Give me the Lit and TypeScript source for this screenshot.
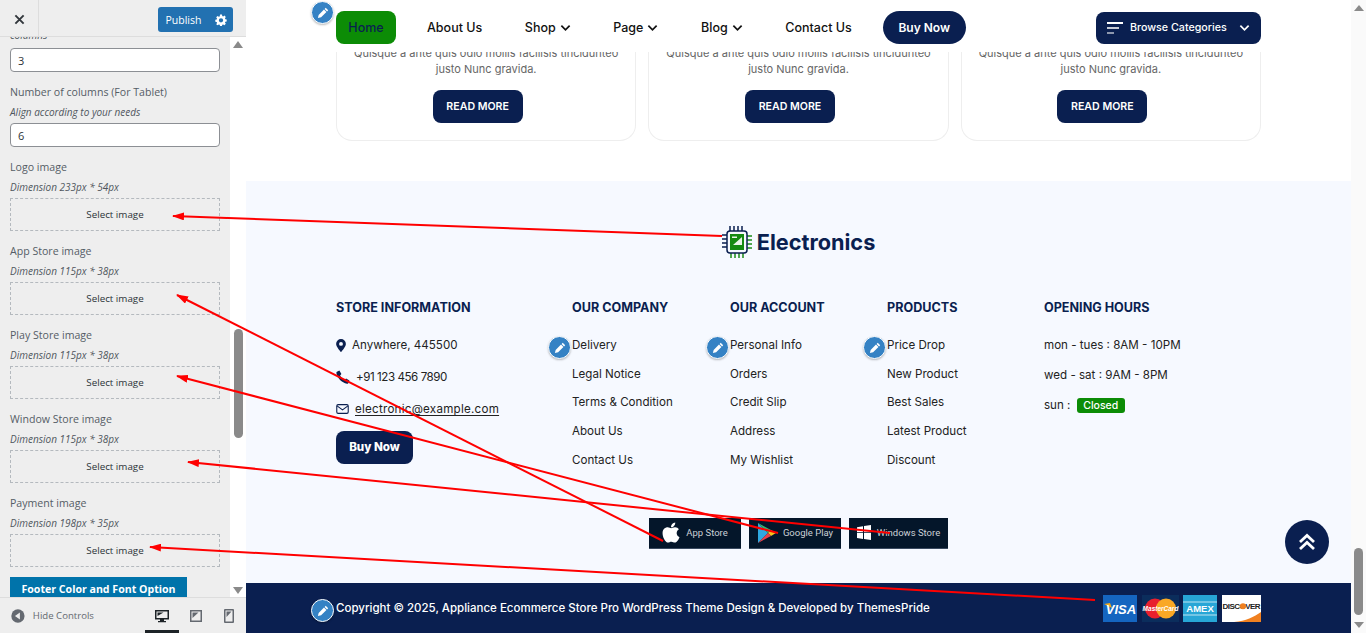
import { LitElement, css, html, svg } from 'lit';
import { customElement } from 'lit/decorators.js';

const pencil = html`<svg viewBox="0 0 20 20" width="14" height="14" aria-hidden="true">
  <path
    fill="#fff"
    d="M13.9 2.6l3.5 3.5-1.6 1.6-3.5-3.5 1.6-1.6zM11.4 5.1l3.5 3.5-7.6 7.6-4.6 1.1 1.1-4.6 7.6-7.6z"
  />
</svg>`;

const chevron = html`<svg class="chev" viewBox="0 0 12 8" width="11" height="8" aria-hidden="true">
  <path d="M1.5 1.5L6 6l4.5-4.5" fill="none" stroke="currentColor" stroke-width="1.9" />
</svg>`;

const imageFields = [
  { label: 'Logo image', dim: 'Dimension 233px * 54px' },
  { label: 'App Store image', dim: 'Dimension 115px * 38px' },
  { label: 'Play Store image', dim: 'Dimension 115px * 38px' },
  { label: 'Window Store image', dim: 'Dimension 115px * 38px' },
  { label: 'Payment image', dim: 'Dimension 198px * 35px' },
];

@customElement('customizer-panel')
export class CustomizerPanel extends LitElement {
  static styles = css`
    :host {
      display: flex;
      flex-direction: column;
      width: 246px;
      height: 633px;
      flex: none;
      background: #eee;
      font-family: 'Open Sans', 'Noto Sans', sans-serif;
      color: #50575e;
    }
    .top {
      height: 36px;
      flex: none;
      display: flex;
      align-items: flex-start;
      border-bottom: 1px solid #ddd;
    }
    .close {
      width: 39px;
      height: 36px;
      padding-top: 2px;
      display: flex;
      align-items: center;
      justify-content: center;
      border-right: 1px solid #ddd;
      box-sizing: border-box;
    }
    .publish {
      margin: 7px 0 0 119px;
      display: flex;
      width: 75px;
      height: 25px;
      border-radius: 3px;
      overflow: hidden;
      background: #2271b1;
      color: #fff;
      font-size: 10.5px;
      font-weight: 500;
    }
    .publish span {
      width: 51px;
      display: flex;
      align-items: center;
      justify-content: center;
    }
    .publish i {
      width: 24px;
      display: flex;
      align-items: center;
      justify-content: center;
    }
    .middle {
      flex: 1;
      display: flex;
      min-height: 0;
    }
    .fields {
      flex: 1;
      padding: 0 10px;
      overflow: hidden;
    }
    .clipped {
      margin-top: -7px;
      height: 11px;
      line-height: 11px;
      font-size: 10px;
      font-style: italic;
    }
    input {
      display: block;
      box-sizing: border-box;
      width: 210px;
      height: 24px;
      margin: 0;
      padding: 0 7px;
      border: 1px solid #8c8f94;
      border-radius: 4px;
      background: #fff;
      color: #2c3338;
      font: 11px 'Open Sans', sans-serif;
    }
    .first {
      margin-top: 7px;
    }
    label {
      display: block;
      font-size: 10.6px;
      font-weight: 500;
      line-height: 16px;
      color: #555d66;
    }
    .tablet {
      margin-top: 12px;
    }
    .dim {
      display: block;
      font-size: 10px;
      font-style: italic;
      line-height: 14px;
      margin: 5px 0 4px;
      color: #50575e;
    }
    .image-field {
      margin-top: 12px;
    }
    .drop {
      box-sizing: border-box;
      width: 210px;
      height: 33px;
      border: 1px dashed #b4b9be;
      display: flex;
      align-items: center;
      justify-content: center;
      font-size: 9.8px;
      color: #2c3338;
    }
    .section-btn {
      margin-top: 10px;
      width: 177px;
      height: 30px;
      background: #0073aa;
      color: #fff;
      font-size: 10.6px;
      font-weight: 700;
      text-align: center;
      line-height: 24px;
    }
    .track {
      width: 16px;
      flex: none;
      background: #fff;
      display: flex;
      flex-direction: column;
      align-items: center;
    }
    .arrow {
      width: 0;
      height: 0;
      border-left: 5px solid transparent;
      border-right: 5px solid transparent;
    }
    .arrow.up {
      margin-top: 4px;
      border-bottom: 7px solid #8a8a8a;
    }
    .arrow.down {
      margin-top: auto;
      margin-bottom: 3px;
      border-top: 7px solid #8a8a8a;
    }
    .thumb {
      width: 9px;
      height: 109px;
      margin-top: 281px;
      border-radius: 5px;
      background: #8a8a8a;
    }
    .bottom {
      height: 36px;
      flex: none;
      display: flex;
      align-items: center;
      box-sizing: border-box;
      border-top: 1px solid #ddd;
      background: #eee;
      padding-left: 11px;
      font-size: 9.6px;
      color: #646970;
    }
    .hide {
      margin: 0 51px 0 8px;
      width: 62px;
    }
    .device {
      width: 34px;
      height: 35px;
      box-sizing: border-box;
      display: flex;
      align-items: center;
      justify-content: center;
      color: #646970;
    }
    .device.on {
      color: #1d2327;
      border-bottom: 3px solid #1d2327;
      padding-top: 3px;
    }
  `;

  render() {
    return html`
      <div class="top">
        <div class="close">
          <svg viewBox="0 0 12 12" width="11" height="11" aria-hidden="true">
            <path d="M1.5 1.5l9 9M10.5 1.5l-9 9" stroke="#32373c" stroke-width="2.1" />
          </svg>
        </div>
        <div class="publish">
          <span>Publish</span>
          <i>
            <svg viewBox="0 0 20 20" width="12" height="12" aria-hidden="true">
              <path
                fill="#fff"
                fill-rule="evenodd"
                d="M8.4 1h3.2l.5 2.5 1.5.6 2.1-1.4 2.3 2.3-1.4 2.1.6 1.5 2.3.5v3.2l-2.3.5-.6 1.5 1.4 2.1-2.3 2.3-2.1-1.4-1.5.6-.5 2.1H8.4l-.5-2.1-1.5-.6-2.1 1.4L2 16.9l1.4-2.1-.6-1.5L.5 12.8V9.6l2.3-.5.6-1.5L2 5.5l2.3-2.3 2.1 1.4 1.5-.6zM10 7a3.6 3.6 0 100 7.2A3.6 3.6 0 0010 7z"
              />
            </svg>
          </i>
        </div>
      </div>
      <div class="middle">
        <div class="fields">
          <div class="clipped">columns</div>
          <input class="first" value="3" />
          <label class="tablet">Number of columns (For Tablet)</label>
          <span class="dim">Align according to your needs</span>
          <input value="6" />
          ${imageFields.map(
            (f) => html`<div class="image-field">
              <label>${f.label}</label>
              <span class="dim">${f.dim}</span>
              <div class="drop">Select image</div>
            </div>`,
          )}
          <div class="section-btn">Footer Color and Font Option</div>
        </div>
        <div class="track">
          <div class="arrow up"></div>
          <div class="thumb"></div>
          <div class="arrow down"></div>
        </div>
      </div>
      <div class="bottom">
        <svg viewBox="0 0 14 14" width="14" height="14" aria-hidden="true">
          <circle cx="7" cy="7" r="6.7" fill="#646970" />
          <path d="M9 3.5v7L4 7z" fill="#eee" />
        </svg>
        <span class="hide">Hide Controls</span>
        <div class="device on">
          <svg viewBox="0 0 14 14" width="14" height="14" aria-hidden="true">
            <path
              fill="currentColor"
              fill-rule="evenodd"
              d="M0 1h14v9.5H9v1.5h2v1.2H3V12h2v-1.500H0zM1.500 2.500v6.500h11V2.500zM2.500 3.500h6L2.500 7z"
            />
          </svg>
        </div>
        <div class="device">
          <svg viewBox="0 0 12 14" width="12" height="14" aria-hidden="true">
            <path
              fill="currentColor"
              fill-rule="evenodd"
              d="M0 1h12v12H0zM1.500 2.500v9h9v-9zM2.500 3.500h6L2.500 9z"
            />
          </svg>
        </div>
        <div class="device">
          <svg viewBox="0 0 10 14" width="10" height="14" aria-hidden="true">
            <path
              fill="currentColor"
              fill-rule="evenodd"
              d="M1 0h8a1 1 0 011 1v12a1 1 0 01-1 1H1a1 1 0 01-1-1V1a1 1 0 011-1zM1.500 1.500v11h7v-11zM2.500 2.500h5L2.500 8z"
            />
          </svg>
        </div>
      </div>
    `;
  }
}

const footerColumns = [
  {
    title: 'OUR COMPANY',
    width: 158,
    links: ['Delivery', 'Legal Notice', 'Terms & Condition', 'About Us', 'Contact Us'],
  },
  {
    title: 'OUR ACCOUNT',
    width: 157,
    links: ['Personal Info', 'Orders', 'Credit Slip', 'Address', 'My Wishlist'],
  },
  {
    title: 'PRODUCTS',
    width: 157,
    links: ['Price Drop', 'New Product', 'Best Sales', 'Latest Product', 'Discount'],
  },
];

@customElement('site-preview')
export class SitePreview extends LitElement {
  static styles = css`
    :host {
      display: flex;
      flex-direction: column;
      flex: 1;
      min-width: 0;
      height: 633px;
      background: #fff;
      font-family: Inter, 'Open Sans', sans-serif;
      color: #1c1c1c;
      --navy: #0a1f50;
    }
    .wrap {
      width: 925px;
      margin: 0 auto;
      position: relative;
    }
    .edit {
      position: absolute;
      box-sizing: border-box;
      width: 23px;
      height: 23px;
      border-radius: 50%;
      background: #3582c4;
      border: 1px solid #fff;
      box-shadow: 0 1px 2px rgba(0, 0, 0, 0.25);
      display: flex;
      align-items: center;
      justify-content: center;
    }

    /* nav */
    .nav {
      height: 52px;
      flex: none;
      background: #fff;
    }
    .nav .wrap {
      height: 52px;
      display: flex;
      align-items: center;
      padding: 7px 0 4px;
      box-sizing: border-box;
    }
    .nav .edit {
      left: -25px;
      top: 1px;
    }
    .home {
      width: 60px;
      height: 33px;
      border-radius: 8px;
      background: #0c8c06;
      color: var(--navy);
      font-size: 12.5px;
      font-weight: 500;
      display: flex;
      align-items: center;
      justify-content: center;
    }
    .nav-links {
      display: flex;
      align-items: center;
      margin-left: 31px;
      gap: 42.6px;
      font-size: 12.5px;
      font-weight: 500;
      color: #111;
    }
    .nav-links a {
      display: flex;
      align-items: center;
      gap: 4px;
      white-space: nowrap;
    }
    .buy-pill {
      margin-left: 31px;
      width: 83px;
      height: 33px;
      border-radius: 17px;
      background: var(--navy);
      color: #fff;
      font-size: 12px;
      font-weight: 600;
      display: flex;
      align-items: center;
      justify-content: center;
    }
    .browse {
      margin-left: auto;
      width: 165px;
      height: 32px;
      box-sizing: border-box;
      padding: 0 11px;
      border-radius: 8px;
      background: var(--navy);
      color: #fff;
      font-size: 10.7px;
      font-weight: 500;
      display: flex;
      align-items: center;
      gap: 7px;
    }
    .browse .chev {
      margin-left: auto;
    }

    /* cards, scrolled so only their lower part shows under the sticky nav */
    .cards-band {
      height: 129px;
      flex: none;
      overflow: hidden;
      display: flex;
      align-items: flex-end;
      padding-bottom: 40px;
      box-sizing: border-box;
    }
    .cards {
      display: grid;
      grid-template-columns: repeat(3, 1fr);
      gap: 12px;
    }
    .card {
      box-sizing: border-box;
      height: 106px;
      border: 1px solid #eee;
      border-top: 0;
      border-radius: 0 0 16px 16px;
      display: flex;
      flex-direction: column;
      align-items: center;
      justify-content: flex-end;
      text-align: center;
      padding: 0 16px 17px;
      font-size: 11px;
      line-height: 16px;
      color: #666;
    }
    .card p {
      margin: 0 0 13px;
      white-space: nowrap;
    }
    .read-more {
      width: 90px;
      height: 33px;
      flex: none;
      margin-right: 17px;
      border-radius: 8px;
      background: var(--navy);
      color: #fff;
      font-size: 10.6px;
      font-weight: 600;
      line-height: 33px;
    }

    /* footer */
    .footer {
      flex: 1;
      min-height: 0;
      background: #f6f9ff;
      position: relative;
    }
    .logo {
      display: flex;
      justify-content: center;
      align-items: center;
      gap: 5px;
      padding-top: 45px;
      height: 32px;
      font-size: 21.7px;
      font-weight: 700;
      color: var(--navy);
    }
    .columns {
      display: flex;
      margin-top: 40px;
      font-size: 11.6px;
    }
    .col {
      position: relative;
      flex: none;
    }
    .col h3 {
      margin: 0 0 19px;
      height: 20px;
      line-height: 20px;
      font-size: 12.6px;
      font-weight: 700;
      color: var(--navy);
      white-space: nowrap;
    }
    .col .edit {
      left: -24px;
      top: 38px;
    }
    .links {
      display: flex;
      flex-direction: column;
      gap: 12.7px;
      line-height: 16px;
      color: #222;
    }
    .contact {
      display: flex;
      flex-direction: column;
      gap: 16px;
      line-height: 16px;
      color: #222;
    }
    .contact div {
      display: flex;
      align-items: center;
      gap: 6px;
      white-space: nowrap;
    }
    .contact u {
      text-underline-offset: 2px;
      letter-spacing: 0.25px;
    }
    .phone {
      letter-spacing: -0.45px;
    }
    .buy-btn {
      margin-top: 14px;
      width: 77px;
      height: 33px;
      border-radius: 8px;
      background: var(--navy);
      color: #fff;
      font-size: 11.6px;
      font-weight: 800;
      line-height: 33px;
      text-align: center;
    }
    .hours {
      display: flex;
      flex-direction: column;
      gap: 14px;
      line-height: 16px;
      color: #222;
    }
    .closed {
      display: inline-block;
      margin-left: 3px;
      padding: 0 6.5px;
      height: 15px;
      line-height: 15px;
      border-radius: 3px;
      background: #0c8c06;
      color: #fff;
      font-size: 10.5px;
      font-weight: 500;
    }
    .stores {
      display: flex;
      justify-content: center;
      gap: 8px;
      margin-top: 50px;
    }
    .store {
      height: 31px;
      box-sizing: border-box;
      border-bottom: 1px solid #3a4a60;
      background: #04162a;
      color: #ccd1d6;
      font-size: 9.5px;
      display: flex;
      align-items: center;
      justify-content: center;
      gap: 6px;
      font-family: Roboto, sans-serif;
    }
    .to-top {
      position: absolute;
      right: 22px;
      bottom: 19px;
      width: 44px;
      height: 44px;
      border-radius: 50%;
      background: var(--navy);
      display: flex;
      align-items: center;
      justify-content: center;
    }

    /* copyright */
    .copyright {
      height: 50px;
      flex: none;
      background: var(--navy);
    }
    .copyright .wrap {
      height: 50px;
      display: flex;
      align-items: center;
      color: #fff;
      font-size: 11.5px;
      font-weight: 500;
      white-space: nowrap;
    }
    .copyright .edit {
      left: -25px;
      top: 16px;
    }
    .pay {
      margin-left: auto;
      display: flex;
      gap: 4.67px;
    }
    .page {
      flex: 1;
      min-width: 0;
      display: flex;
      flex-direction: column;
    }
    .row {
      display: flex;
      height: 633px;
    }
    .track {
      width: 15px;
      flex: none;
      background: #fafafa;
      display: flex;
      flex-direction: column;
      align-items: center;
    }
    .arrow {
      width: 0;
      height: 0;
      border-left: 5px solid transparent;
      border-right: 5px solid transparent;
    }
    .arrow.up {
      margin-top: 5px;
      border-bottom: 6px solid #8a8a8a;
    }
    .thumb {
      width: 9px;
      height: 67px;
      margin-top: 537px;
      border-radius: 5px;
      background: #8a8a8a;
    }
    .arrow.down {
      margin-top: 7px;
      border-top: 6px solid #8a8a8a;
    }
  `;

  private edit() {
    return html`<span class="edit">${pencil}</span>`;
  }

  render() {
    return html`<div class="row">
      <div class="page">
        <div class="nav">
          <div class="wrap">
            ${this.edit()}
            <div class="home">Home</div>
            <div class="nav-links">
              <a>About Us</a>
              <a>Shop ${chevron}</a>
              <a>Page ${chevron}</a>
              <a>Blog ${chevron}</a>
              <a>Contact Us</a>
            </div>
            <div class="buy-pill">Buy Now</div>
            <div class="browse">
              <svg viewBox="0 0 16 12" width="16" height="12" aria-hidden="true">
                <path d="M0 0h16v2H0z" fill="#fff" />
                <path d="M0 5h12v2H0z" fill="#c5cad6" />
                <path d="M0 10h7v2H0z" fill="#8d97ad" />
              </svg>
              Browse Categories ${chevron}
            </div>
          </div>
        </div>

        <div class="cards-band">
          <div class="wrap cards">
            ${[0, 1, 2].map(
              () => html`<div class="card">
                <p>Quisque a ante quis odio mollis facilisis tincidunteo<br />justo Nunc gravida.</p>
                <div class="read-more">READ MORE</div>
              </div>`,
            )}
          </div>
        </div>

        <div class="footer">
          <div class="wrap">
            <div class="logo">
              <svg viewBox="0 0 30 32" width="30" height="32" aria-hidden="true">
                <path
                  d="M8 0v6M12 0v6M16 0v6M20 0v6M0 9h6M0 13h6M0 17h6M0 21h6"
                  stroke="#0a1f50"
                  stroke-width="1.5"
                />
                <path
                  d="M9 26v6M13 26v6M17 26v6M21 26v6M24 10h6M24 14h6M24 18h6M24 22h6"
                  stroke="#1d8a1a"
                  stroke-width="1.5"
                />
                <rect x="5" y="5" width="20" height="22" rx="3" fill="#f6f9ff" stroke="#0a1f50" stroke-width="1.5" />
                <rect x="8" y="8" width="14" height="16" fill="#158a12" />
                <path d="M20 11v8h-9z" fill="#e9f4e9" />
                <path d="M10 10.5h5v1.5h-5z" fill="#e9f4e9" />
              </svg>
              Electronics
            </div>

            <div class="columns">
              <div class="col" style="width:236px">
                <h3>STORE INFORMATION</h3>
                <div class="contact">
                  <div>
                    <svg viewBox="0 0 12 16" width="10" height="13" aria-hidden="true">
                      <path
                        fill="#0a1f50"
                        fill-rule="evenodd"
                        d="M6 0a6 6 0 00-6 6c0 3.6 6 10 6 10s6-6.4 6-10a6 6 0 00-6-6zm0 3.6a2.4 2.4 0 110 4.8 2.4 2.4 0 010-4.800z"
                      />
                    </svg>
                    Anywhere, 445500
                  </div>
                  <div>
                    <svg viewBox="0 0 14 14" width="14" height="14" aria-hidden="true">
                      <path
                        fill="#0a1f50"
                        d="M3.4.6l2 3.3-1.3 1.6c.8 1.7 2.3 3.2 4.4 4.4l1.6-1.3 3.3 2-1.1 2.7c-.3.4-.8.6-1.3.5C5.800 12.800 1.200 8.200.4 3.100.3 2.600.5 2.100.9 1.800z"
                      />
                    </svg>
                    <span class="phone">+91 123 456 7890</span>
                  </div>
                  <div>
                    <svg viewBox="0 0 14 11" width="13" height="10" aria-hidden="true">
                      <rect x=".7" y=".7" width="12.6" height="9.6" rx="1.5" fill="none" stroke="#0a1f50" stroke-width="1.2" />
                      <path d="M1 2l6 4.5L13 2" fill="none" stroke="#0a1f50" stroke-width="1.2" />
                    </svg>
                    <u>electronic@example.com</u>
                  </div>
                </div>
                <div class="buy-btn">Buy Now</div>
              </div>
              ${footerColumns.map(
                (c) => html`<div class="col" style="width:${c.width}px">
                  <h3>${c.title}</h3>
                  ${this.edit()}
                  <div class="links">${c.links.map((l) => html`<span>${l}</span>`)}</div>
                </div>`,
              )}
              <div class="col">
                <h3>OPENING HOURS</h3>
                <div class="hours">
                  <span>mon - tues : 8AM - 10PM</span>
                  <span>wed - sat : 9AM - 8PM</span>
                  <span>sun : <span class="closed">Closed</span></span>
                </div>
              </div>
            </div>

            <div class="stores">
              <div class="store" style="width:92px">
                <svg viewBox="0 0 384 512" width="18" height="23" aria-hidden="true">
                  <path
                    fill="#fff"
                    d="M318.7 268.7c-.2-36.7 16.4-64.4 50-84.8-18.8-26.9-47.2-41.7-84.7-44.6-35.5-2.8-74.3 20.7-88.5 20.7-15 0-49.4-19.7-76.4-19.7C63.3 141.2 4 184.8 4 273.5q0 39.3 14.4 81.2c12.8 36.7 59 126.7 107.2 125.2 25.2-.6 43-17.9 75.8-17.9 31.8 0 48.3 17.9 76.4 17.9 48.6-.7 90.4-82.5 102.6-119.3-65.2-30.7-61.7-90-61.7-91.9zm-56.6-164.2c27.3-32.4 24.8-61.9 24-72.5-24.1 1.4-52 16.4-67.9 34.9-17.5 19.8-27.8 44.3-25.6 71.9 26.1 2 49.9-11.4 69.5-34.3z"
                  />
                </svg>
                App Store
              </div>
              <div class="store" style="width:92px">
                <svg viewBox="0 0 20 22" width="20" height="22" aria-hidden="true">
                  <path d="M1 1l10 10L1 21z" fill="#2fa8e0" />
                  <path d="M1 1l13 7-3 3z" fill="#34b96e" />
                  <path d="M14 8l5 3-5 3-3-3z" fill="#f6c21c" />
                  <path d="M1 21l10-10 3 3z" fill="#e8404a" />
                </svg>
                Google Play
              </div>
              <div class="store" style="width:99px">
                <svg viewBox="0 0 14 15" width="14" height="15" aria-hidden="true">
                  <path fill="#fff" d="M0 2.200l6-1v6H0zM7 1l7-1v7.200H7zM0 8h6v6l-6-1zM7 8h7v7l-7-1z" />
                </svg>
                Windows Store
              </div>
            </div>
          </div>
          <div class="to-top">
            <svg viewBox="0 0 18 18" width="18" height="18" aria-hidden="true">
              <path d="M2 9l7-6.5L16 9M2 16l7-6.5L16 16" fill="none" stroke="#fff" stroke-width="2.8" />
            </svg>
          </div>
        </div>

        <div class="copyright">
          <div class="wrap">
            ${this.edit()}
            Copyright © 2025, Appliance Ecommerce Store Pro WordPress Theme Design &amp; Developed by ThemesPride
            <div class="pay">
              <svg viewBox="0 0 34 27" width="34" height="27" role="img">
                <rect width="34" height="27" fill="#1565c0" />
                <path d="M1 9l6-1 2 5z" fill="#f2a81d" />
                <text x="18" y="19" text-anchor="middle" font-family="Liberation Sans" font-size="13" font-weight="700" font-style="italic" fill="#fff">VISA</text>
              </svg>
              <svg viewBox="0 0 37 27" width="37" height="27" role="img">
                <rect width="37" height="27" fill="#0b2d5c" />
                <circle cx="13" cy="13.5" r="10" fill="#e8202e" />
                <circle cx="24" cy="13.5" r="10" fill="#f9a825" />
                <text x="18.5" y="16" text-anchor="middle" font-family="Liberation Sans" font-size="6.5" font-weight="700" font-style="italic" fill="#fff">MasterCard</text>
              </svg>
              <svg viewBox="0 0 34 27" width="34" height="27" role="img">
                <rect width="34" height="27" fill="#27a6d6" />
                <path d="M0 7h34M0 20h34" stroke="#fff" stroke-width=".7" />
                <text x="17" y="17" text-anchor="middle" font-family="Liberation Sans" font-size="9.5" font-weight="700" fill="#fff">AMEX</text>
              </svg>
              <svg viewBox="0 0 39 27" width="39" height="27" role="img">
                <rect width="39" height="27" fill="#fff" />
                <path d="M39 17v10H12c12-1 20-5 27-10z" fill="#f08020" />
                <text x="19.5" y="14" text-anchor="middle" font-family="Liberation Sans" font-size="8" font-weight="700" fill="#222" textLength="38">DISCOVER</text>
                <circle cx="21" cy="11.3" r="3" fill="#f08020" />
              </svg>
            </div>
          </div>
        </div>
      </div>
      <div class="track">
        <div class="arrow up"></div>
        <div class="thumb"></div>
        <div class="arrow down"></div>
      </div>
    </div>`;
  }
}

// annotation arrows drawn by hand on the screenshot: [fromX, fromY, tipX, tipY]
const arrows = [
  [722, 236, 173, 216],
  [663, 541, 177, 295],
  [778, 533, 177, 376],
  [890, 533, 188, 462],
  [1095, 600, 150, 547],
];

@customElement('app-root')
export class AppRoot extends LitElement {
  static styles = css`
    :host {
      display: flex;
      position: relative;
      width: 1366px;
      height: 633px;
      overflow: hidden;
    }
    .marks {
      position: absolute;
      inset: 0;
      pointer-events: none;
    }
  `;

  render() {
    return html`
      <customizer-panel></customizer-panel>
      <site-preview></site-preview>
      <svg class="marks" width="1366" height="633" viewBox="0 0 1366 633" aria-hidden="true">
        <defs>
          <marker id="head" markerWidth="12" markerHeight="8" refX="11" refY="4" orient="auto" markerUnits="userSpaceOnUse">
            <path d="M0 0l12 4-12 4z" fill="#f00" />
          </marker>
        </defs>
        ${arrows.map(
          ([x1, y1, x2, y2]) =>
            svg`<line x1=${x1} y1=${y1} x2=${x2} y2=${y2} stroke="#f00" stroke-width="2" marker-end="url(#head)"></line>`,
        )}
      </svg>
    `;
  }
}
